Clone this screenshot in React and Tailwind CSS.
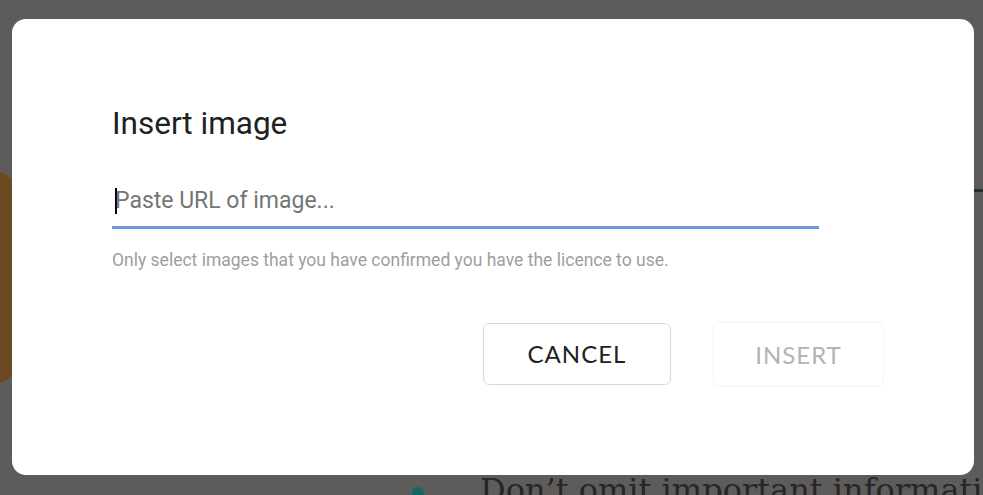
export default function App() {
  return (
    <div className="relative w-[983px] h-[495px] overflow-hidden bg-[#5d5c5a] font-['Roboto',sans-serif]">
      {/* Dimmed page behind the modal */}
      <div className="absolute left-[-40px] top-[170px] w-[60px] h-[215px] rounded-r-[30px] bg-[#6b4a22]" />
      <div className="absolute right-0 top-[189px] w-[12px] h-[3px] bg-[#26302a]" />
      <div className="absolute left-[412px] top-[487px] w-[12px] h-[12px] rounded-full bg-[#0e6a64]" />
      <div className="absolute left-[480px] top-[470px] whitespace-nowrap text-[32px] leading-[40px] text-[#262626] font-['DejaVu_Serif',serif]">
        Don’t omit important information
      </div>

      {/* Modal */}
      <div className="absolute left-[12px] top-[19px] w-[962px] h-[456px] rounded-[14px] bg-white pl-[100px] pr-[90px] pt-[87px]">
        <h2 className="text-[31.5px] leading-[36px] text-[#212121]">Insert image</h2>

        <div className="mt-[46px] w-[707px] border-b-[3px] border-[#6699dd] pb-[12px] flex items-center">
          <span className="ml-[3px] w-[2px] h-[26px] bg-black" />
          <span className="ml-[-2px] text-[23px] leading-[26px] text-[#757575]">Paste URL of image...</span>
        </div>

        <p className="mt-[20px] text-[17.5px] leading-[22px] text-[#9e9e9e]">
          Only select images that you have confirmed you have the licence to use.
        </p>

        <div className="mt-[52px] flex justify-end gap-[42px]">
          <button className="w-[188px] h-[62px] rounded-[6px] border border-[#dadada] bg-white text-[24px] tracking-[1px] text-[#222] font-['Lato',sans-serif]">
            CANCEL
          </button>
          <button className="w-[171px] h-[65px] -mt-px rounded-[6px] border border-[#f4f4f4] bg-white text-[24px] tracking-[1px] text-[#b3b3b3] font-['Lato',sans-serif]">
            INSERT
          </button>
        </div>
      </div>
    </div>
  );
}
